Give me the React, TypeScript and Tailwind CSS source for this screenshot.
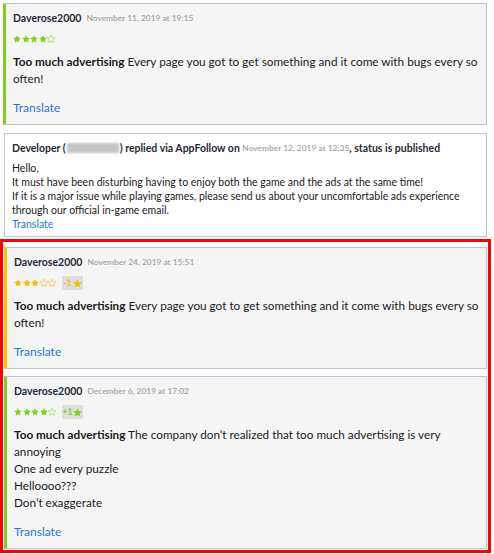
import React from "react";

const STAR = "M12 2l3.09 6.26L22 9.27l-5 4.87 1.18 6.88L12 17.77l-6.18 3.25L7 14.14 2 9.27l6.91-1.01L12 2z";

function Stars({ n, color }: { n: number; color: string }) {
  return (
    <div className="flex items-center gap-[0.5px]">
      {[0, 1, 2, 3, 4].map((i) => (
        <svg key={i} width="8" height="8" viewBox="1.5 1.5 21 21" className="overflow-visible">
          {i < n ? (
            <path d={STAR} fill={color} />
          ) : (
            <path d={STAR} fill="none" stroke={color} strokeWidth="1.5" />
          )}
        </svg>
      ))}
    </div>
  );
}

function Badge({ text, color }: { text: string; color: string }) {
  return (
    <div className="ml-[6px] flex h-[14px] w-[21px] items-center justify-center gap-[1px] bg-[#dedede] text-[8.5px] font-bold" style={{ color }}>
      <span>{text}</span>
      <svg width="9" height="9" viewBox="1.5 1.5 21 21">
        <path d={STAR} fill={color} />
      </svg>
    </div>
  );
}

function Review({
  date,
  stars,
  color,
  badge,
  children,
}: {
  date: string;
  stars: number;
  color: string;
  badge?: string;
  children: React.ReactNode;
}) {
  const bar = color === "green" ? "border-l-[#7ed321]" : "border-l-[#f8c400]";
  const starColor = color === "green" ? "#7ed321" : "#f5c000";
  return (
    <div className={`border border-[#bcc6d8] border-l-[3px] ${bar} bg-[#f5f5f5] pb-[8px] pl-[7px] pr-[6px] pt-[6px]`}>
      <div className="flex h-[17px] items-center gap-[5px]">
        <span className="text-[10.5px] font-bold text-[#1f2a37]">Daverose2000</span>
        <span className="text-[8.4px] font-semibold text-[#a3a3a3]">{date}</span>
      </div>
      <div className="mt-[5px] flex h-[14px] items-center">
        <Stars n={stars} color={starColor} />
        {badge && <Badge text={badge} color={starColor} />}
      </div>
      <div className="mt-[7px] text-[11.75px] leading-[17px] text-[#1a1a1a]">{children}</div>
      <div className="mt-[12px] text-[12px] leading-[17px] text-[#1f78d1]">Translate</div>
    </div>
  );
}

export default function App() {
  return (
    <div className="h-[554px] w-[494px] overflow-hidden bg-white pt-[3px] font-['Lato','Open_Sans',sans-serif]">
      <div className="ml-[3px] w-[484px]">
        <Review date="November 11, 2019 at 19:15" stars={4} color="green">
          <b>Too much advertising</b> Every page you got to get something and it come with bugs every so often!
        </Review>
      </div>
      <div className="ml-[4px] mt-[8px] w-[483px] border border-[#bcc6d8] bg-white px-[7px] pb-[5px] pt-[7px] text-[10.5px] leading-[14px] text-[#1a1a1a]">
        <div className="flex h-[14px] items-center whitespace-nowrap font-bold text-[#1f2a37]">
          <span>Developer (</span>
          <span className="mx-[1px] inline-block h-[10px] w-[52px] bg-[#c4c4c4] blur-[1px]"></span>
          <span>) replied via AppFollow on&nbsp;</span>
          <span className="text-[8.4px] font-semibold text-[#a3a3a3]">November 12, 2019 at 12:35</span>
          <span>, status is published</span>
        </div>
        <div className="mt-[6px]">
          <div>Hello,</div>
          <div>It must have been disturbing having to enjoy both the game and the ads at the same time!</div>
          <div>If it is a major issue while playing games, please send us about your uncomfortable ads experience through our official in-game email.</div>
          <div className="text-[#1f78d1]">Translate</div>
        </div>
      </div>
      <div className="mt-[2px] flex w-[491px] flex-col gap-[7px] border-[3px] border-[#ff0000] px-[1px] pb-[1px] pt-[5px]">
        <Review date="November 24, 2019 at 15:51" stars={3} color="yellow" badge="-1">
          <b>Too much advertising</b> Every page you got to get something and it come with bugs every so often!
        </Review>
        <Review date="December 6, 2019 at 17:02" stars={4} color="green" badge="+1">
          <b>Too much advertising</b> The company don’t realized that too much advertising is very annoying
          <br />
          One ad every puzzle
          <br />
          Helloooo???
          <br />
          Don’t exaggerate
        </Review>
      </div>
    </div>
  );
}
